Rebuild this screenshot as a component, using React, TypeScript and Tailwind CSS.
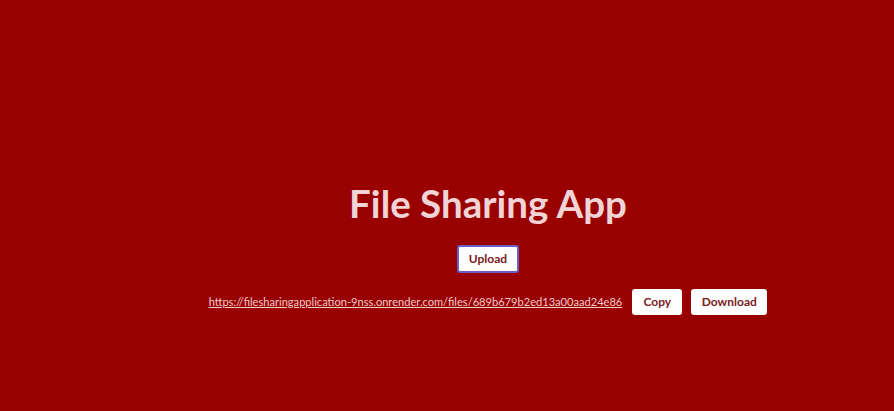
export default function App() {
  const link =
    "https://filesharingapplication-9nss.onrender.com/files/689b679b2ed13a00aad24e86";

  return (
    <div
      className="w-full h-[411px] bg-[#990000] flex flex-col items-center pl-[82px] pt-[176px]"
      style={{ fontFamily: "Lato, 'Open Sans', sans-serif" }}
    >
      {/* TITLE */}
      <h1 className="text-[38.5px] leading-[54px] font-bold text-[#f2d3d6]">
        File Sharing App
      </h1>

      {/* UPLOAD */}
      <button className="mt-[15px] h-[28px] w-[62px] rounded-[3px] bg-white border-2 border-[#6b5fc7] text-[12px] font-bold text-[#7a1a1a]">
        Upload
      </button>

      {/* LINK ROW */}
      <div className="mt-[16px] flex items-center gap-[9px]">
        <a
          href="#"
          className="text-[11.1px] text-[#f2c9cc] underline mr-[-4px]"
        >
          {link}
        </a>
        <button className="ml-[5px] h-[26px] w-[50px] rounded-[3px] bg-white text-[12px] font-bold text-[#7a1a1a]">
          Copy
        </button>
        <button className="h-[26px] w-[76px] rounded-[3px] bg-white text-[12px] font-bold text-[#7a1a1a]">
          Download
        </button>
      </div>
    </div>
  );
}
